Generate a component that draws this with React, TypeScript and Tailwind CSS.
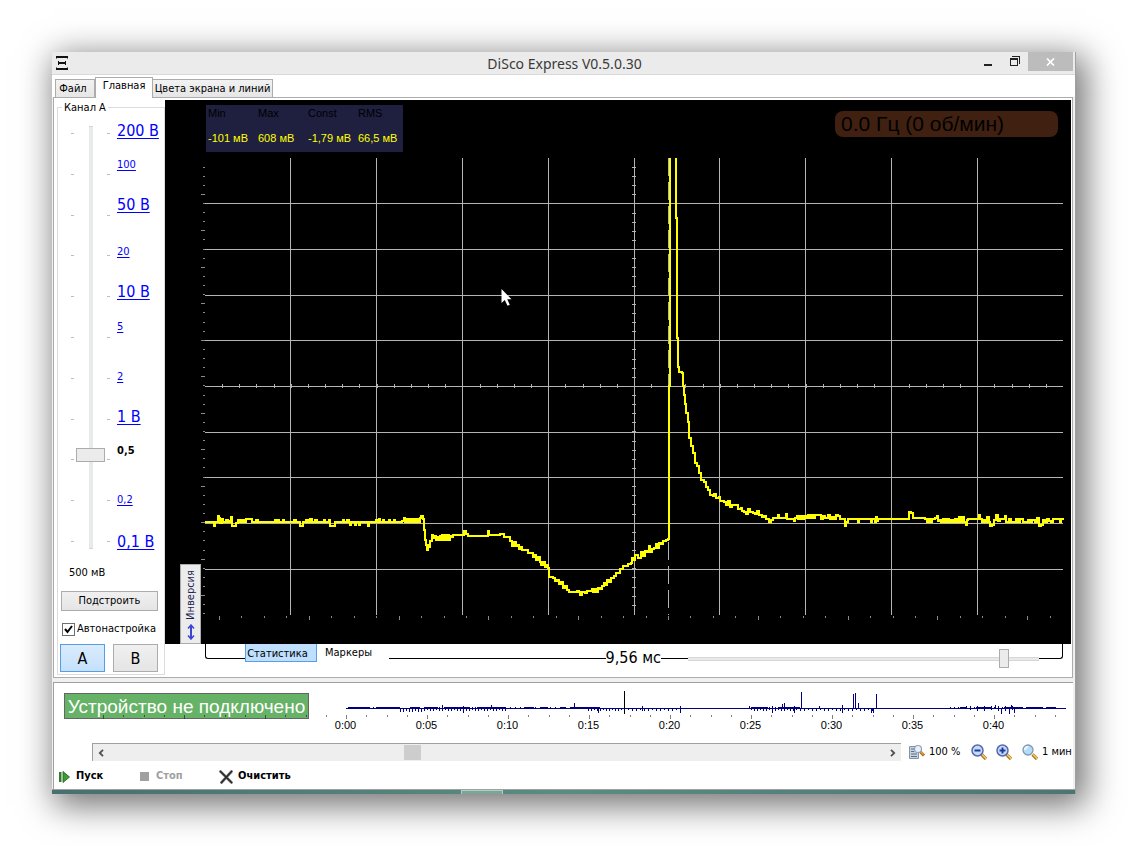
import React from "react";

const range = (n: number) => Array.from({ length: n }, (_, i) => i);

const GRID_X = [290, 376, 462, 548, 634, 719, 805, 891, 977];
const GRID_Y = [203, 249, 295, 340, 386, 432, 477, 523, 569];

const TRACE =
  "205,522 212,522 213,522 214,526 215,522 217,522 218,516 219,518 220,523 222,519 223,522 226,520 228,522 230,521 231,517 232,526 235,526 236,523 238,520 240,522 242,520 244,522 246,519 251,519 252,522 256,520 258,522 274,522 275,520 276,522 278,520 279,522 283,520 284,522 293,522 294,520 296,522 299,522 300,526 302,526 303,522 306,520 308,522 310,519 312,522 315,520 317,522 324,520 325,522 329,520 330,526 334,526 335,522 342,522 343,520 344,522 346,522 347,520 349,522 350,525 351,522 354,522 355,525 356,522 359,525 360,522 364,522 368,526 369,522 376,520 377,522 379,519 380,522 383,520 384,522 389,520 390,522 394,520 395,522 402,521 404,518 405,522 407,519 408,522 410,519 412,522 413,519 415,522 417,519 418,522 420,518 421,516 423,519 424,530 425,540 426,545 427,550 428,545 429,547 430,541 432,535 433,538 435,536 436,540 437,537 438,540 440,536 441,540 442,535 443,540 445,535 446,540 448,535 449,540 450,536 452,537 453,535 460,535 462,535 464,531 466,534 468,536 487,536 488,531 489,535 499,535 500,534 502,534 504,537 508,537 510,541 512,546 514,542 516,546 518,545 519,549 521,547 522,550 526,550 528,553 531,553 533,557 535,555 536,560 538,557 540,562 541,565 543,562 545,567 547,565 548,568 549,577 551,577 553,578 555,581 557,580 559,584 561,582 563,588 565,586 567,590 569,592 576,592 577,591 579,592 580,595 582,592 585,593 587,591 591,591 592,589 593,592 595,589 597,592 598,588 600,589 602,586 604,583 605,585 607,580 609,582 611,578 614,576 616,573 618,573 620,569 623,566 626,566 628,564 631,563 632,558 634,560 635,555 638,558 641,552 643,556 645,551 647,552 649,546 650,552 652,549 654,548 656,544 657,548 659,543 661,544 663,541 666,540 668,539 669,534 669,386 670,386 670,158";
const TRACE_FALL =
  "676,158 676,218 677,218 677,338 678,338 678,367 679,372 682,373 683,386 684,395 685,404 686,413 688,422 689,438 691,446 693,453 695,463 697,466 699,473 701,480 704,482 706,487 708,490 710,495 713,496 714,494 716,498 719,497 720,501 724,502 726,505 728,501 730,507 732,505 736,505 738,509 741,508 742,511 744,512 746,514 748,509 750,512 751,512 753,513 755,514 757,511 759,515 762,517 764,516 766,519 769,522 771,520 773,518 777,518 778,515 779,518 784,518 786,514 787,519 792,519 794,521 795,518 797,516 798,519 800,516 802,519 804,516 806,518 808,515 809,518 811,515 813,518 815,515 820,515 821,519 823,516 825,518 828,515 830,519 832,517 834,519 836,515 838,516 840,519 843,519 844,519 845,526 846,522 848,519 857,519 858,522 859,519 869,519 871,522 872,519 875,522 876,517 877,521 878,519 907,519 908,519 909,512 911,513 913,518 915,518 925,519 927,522 929,519 930,522 932,519 935,518 937,516 938,521 940,520 941,522 943,519 945,522 947,519 949,522 951,520 953,522 955,519 957,522 959,517 961,522 963,517 964,522 966,525 967,520 968,519 977,519 979,515 980,519 982,522 984,520 985,522 987,517 989,522 990,526 992,525 994,520 996,515 998,521 1000,519 1004,519 1005,516 1006,522 1009,519 1011,522 1014,522 1016,519 1018,522 1020,519 1023,522 1028,520 1030,522 1032,520 1035,522 1037,518 1039,526 1041,525 1043,520 1045,522 1047,519 1049,521 1051,522 1053,519 1055,519 1058,519 1060,522 1061,519 1063,520";

// Sample-and-hold path: each sample is held until the next one.
const stepped = (points: string) =>
  points
    .split(" ")
    .map((p, i) => {
      const [x, y] = p.split(",");
      return i === 0 ? `M${x} ${y}` : `H${x}V${y}`;
    })
    .join("");

// Activity bands on the overview: [start, end, reach above, reach below, step]
const BANDS = [
  [348, 400, 1, 0, 5],
  [400, 424, 0, 3, 3],
  [424, 510, 1, 2, 3],
  [510, 600, 1, 0, 5],
  [588, 624, 0, 2, 3],
  [624, 686, 0, 2, 4],
  [751, 800, 1, 2, 3],
  [800, 876, 0, 2, 4],
  [950, 1055, 1, 0, 4],
  [970, 1020, 2, 2, 7],
];
const THICK = [
  [348, 370], [376, 400], [410, 420], [424, 438], [444, 470], [477, 506], [524, 534], [540, 548], [560, 566], [571, 600], [751, 768], [778, 800], [960, 966], [976, 990], [1004, 1022], [1026, 1042], [1046, 1056],
];
// Single spikes on the overview: [x, top, bottom]
const SPIKES = [
  [442, 705, 709], [463, 706, 713], [491, 705, 709], [574, 703, 709], [598, 708, 713], [642, 706, 711], [680, 706, 713], [749, 706, 709],
  [772, 706, 713], [782, 704, 709], [784, 703, 709], [794, 706, 713], [801, 692, 709], [819, 706, 709], [842, 705, 713], [853, 694, 709],
  [855, 693, 709], [858, 703, 709], [871, 708, 713], [873, 708, 713], [876, 694, 709], [966, 706, 709], [995, 705, 709], [1001, 708, 714],
  [1009, 708, 714], [1011, 705, 709], [1014, 708, 713],
];

const SCALE = [
  { text: "200 В", cls: "h-5 text-base" },
  { text: "100", cls: "mt-[17px] h-3.5 text-[11px]" },
  { text: "50 В", cls: "mt-[23px] h-5 text-base" },
  { text: "20", cls: "mt-[30px] h-3.5 text-[11px]" },
  { text: "10 В", cls: "mt-[23px] h-5 text-base" },
  { text: "5", cls: "mt-[18px] h-3.5 text-[11px]" },
  { text: "2", cls: "mt-[36px] h-3.5 text-[11px]" },
  { text: "1 В", cls: "mt-[23px] h-5 text-base" },
  { text: "0,5", cls: "mt-[17px] h-3.5 text-[11px]", current: true },
  { text: "0,2", cls: "mt-[35px] h-3.5 text-[11px]" },
  { text: "0,1 В", cls: "mt-[25px] h-5 text-base" },
];

function TitleBar() {
  return (
    <header className="flex h-[23px] border-b border-[#d9d9d9] bg-[#ebebeb]">
      <div className="flex flex-1 items-center pl-1">
        <svg width="12" height="14" viewBox="0 0 12 14" aria-hidden="true" fill="none" stroke="#111" strokeWidth="2">
          <path d="M0 2.500V1h12v1.500M0 11.500V13h12v-1.500M2 7h8" />
          <path d="M2.500 5v4M9.500 5v4" strokeWidth="1" />
        </svg>
      </div>
      <h1 className="font-['Noto_Sans','Open_Sans',sans-serif] text-[14px] leading-[23px] text-[#3a3a3a]">DiSco Express V0.5.0.30</h1>
      <div className="flex flex-1 justify-end pr-[2px]">
        <button aria-label="Свернуть" className="flex w-[26px] items-center justify-center">
          <svg width="10" height="12" viewBox="0 0 10 12" aria-hidden="true"><path d="M1 7h8v2H1z" fill="#222" /></svg>
        </button>
        <button aria-label="Восстановить" className="flex w-[27px] items-center justify-center pb-1">
          <svg width="10" height="10" viewBox="0 0 10 10" aria-hidden="true" fill="none" stroke="#222" shapeRendering="crispEdges">
            <path d="M.5 2.500h7v7h-7zM0 3.500h8M2 .5h7.500V8" />
          </svg>
        </button>
        <button aria-label="Закрыть" className="flex h-[19px] w-[45px] items-center justify-center bg-[#bcbcbc]">
          <svg width="9" height="8" viewBox="0 0 9 8" aria-hidden="true"><path d="M1 .5l7 7M8 .5l-7 7" stroke="#fff" strokeWidth="1.700" /></svg>
        </button>
      </div>
    </header>
  );
}

function Tabs() {
  const idle = "h-[18px] border border-b-0 border-[#acacac] bg-gradient-to-b from-[#f2f2f2] to-[#e6e6e6]";
  return (
    <div role="tablist" className="flex h-[22px] items-end pl-[3px]">
      <button role="tab" aria-selected="false" className={`${idle} w-10 pt-px pr-1`}>Файл</button>
      <button role="tab" aria-selected="true" className="relative z-10 -mb-px h-[21px] w-[58px] border border-b-0 border-[#acacac] bg-white pb-[3px]">Главная</button>
      <button role="tab" aria-selected="false" className={`${idle} w-[120px] border-l-0 pt-px whitespace-nowrap`}>Цвета экрана и линий</button>
    </div>
  );
}

function TickColumn() {
  return (
    <div className="flex w-[3px] flex-col justify-between py-[7px]">
      {range(11).map((i) => (
        <div key={i} className="h-px bg-[#bcbcbc]" />
      ))}
    </div>
  );
}

function ChannelPanel() {
  return (
    <fieldset className="h-[575px] w-[108px] shrink-0 border border-[#dcdcdc]">
      <legend className="ml-1 h-3.5 px-0.5 leading-4">Канал А</legend>
      <div className="flex h-[437px]">
        <div className="mt-3 ml-[13px] flex h-[423px] gap-[2px]">
          <TickColumn />
          <input
            type="range"
            aria-label="Предел измерения"
            min={0}
            max={1000}
            defaultValue={211}
            className="m-0 h-full w-[29px] appearance-none bg-transparent [direction:rtl] [writing-mode:vertical-lr] [&::-webkit-slider-runnable-track]:w-1 [&::-webkit-slider-runnable-track]:border-x [&::-webkit-slider-runnable-track]:border-[#d6d6d6] [&::-webkit-slider-runnable-track]:bg-[#e7eaea] [&::-webkit-slider-thumb]:-ml-[13px] [&::-webkit-slider-thumb]:h-3.5 [&::-webkit-slider-thumb]:w-[29px] [&::-webkit-slider-thumb]:appearance-none [&::-webkit-slider-thumb]:border [&::-webkit-slider-thumb]:border-[#acacac] [&::-webkit-slider-thumb]:bg-[#ebebeb]"
          />
          <TickColumn />
        </div>
        <nav aria-label="Пределы" className="mt-[7px] ml-[7px] flex flex-col items-start">
          {SCALE.map((s) => (
            <a
              key={s.text}
              href="#scale"
              className={`flex items-center whitespace-nowrap ${s.cls} ${s.current ? "font-bold text-black" : "text-[#0000ff] underline underline-offset-2"}`}
            >
              {s.text}
            </a>
          ))}
        </nav>
      </div>
      <p className="mt-3.5 h-3.5 pl-[11px] leading-4">500 мВ</p>
      <button className="mt-3 ml-[3px] block h-5 w-[97px] border border-[#acacac] bg-gradient-to-b from-[#f0f0f0] to-[#e5e5e5] pt-px">Подстроить</button>
      <label className="mt-[11px] ml-1 flex h-3.5 items-center gap-[2px] whitespace-nowrap">
        <span className="grid h-[13px] w-[13px] shrink-0">
          <input type="checkbox" defaultChecked className="peer col-start-1 row-start-1 m-0 h-[13px] w-[13px] appearance-none border border-[#707070] bg-white" />
          <svg viewBox="0 0 13 13" aria-hidden="true" className="pointer-events-none invisible col-start-1 row-start-1 peer-checked:visible">
            <path d="M3 6l2.500 3L10 3" fill="none" stroke="#000" strokeWidth="2" />
          </svg>
        </span>
        Автонастройка
      </label>
      <div className="mt-2 ml-[2px] flex gap-2 text-base">
        <button aria-pressed="true" className="h-7 w-[45px] border border-[#569de5] bg-gradient-to-b from-[#daecfc] to-[#c4e0fc] pt-px">A</button>
        <button aria-pressed="false" className="h-7 w-[45px] border border-[#acacac] bg-gradient-to-b from-[#f0f0f0] to-[#e5e5e5] pt-px">B</button>
      </div>
    </fieldset>
  );
}

function Plot() {
  return (
    <svg viewBox="165 100 906 544" preserveAspectRatio="none" className="block h-[544px] w-full" shapeRendering="crispEdges" role="img" aria-label="Осциллограмма">
      <g stroke="#b4b4b4" fill="none">
        {GRID_X.map((x) => <path key={x} d={`M${x + 0.5} 158V615`} />)}
        {GRID_Y.map((y) => <path key={y} d={`M205 ${y + 0.5}H1063`} />)}
        {range(49).map((i) => {
          const y = Math.round(167 + 9.12 * i) + 0.5;
          return <path key={i} d={`M632 ${y}h4`} />;
        })}
        {range(49).map((i) => {
          const x = Math.round(205 + 17.16 * (i + 1)) + 0.5;
          return <path key={i} d={`M${x} 384v4`} />;
        })}
        <path d="M668.500 158V615" strokeDasharray="18 6" />
      </g>
      <g stroke="#8a8a8a" fill="none">
        {range(50).map((i) => {
          const y = Math.round(166.5 + 9.12 * i) + 0.5;
          return <path key={i} d={i % 4 === 3 ? `M201 ${y}h4` : `M203 ${y}h2`} />;
        })}
        {range(38).map((i) => {
          const x = Math.round(219 + 22.45 * i) + 0.5;
          return <path key={i} d={i % 4 === 0 ? `M${x} 616v4` : `M${x} 616v2`} />;
        })}
      </g>
      <g stroke="#ffff00" strokeWidth="2" fill="none">
        <path d={stepped(TRACE)} />
        <path d={stepped(TRACE_FALL)} />
      </g>
      <path d="M501.500 289v14l3.300-3 2.700 5.800 2.300-1-2.600-5.600h4.300z" fill="#fff" shapeRendering="auto" />
    </svg>
  );
}

function Stats() {
  const cells = [
    ["Min", "-101 мВ"],
    ["Max", "608 мВ"],
    ["Const", "-1,79 мВ"],
    ["RMS", "66,5 мВ"],
  ];
  return (
    <dl className="absolute top-[5px] left-[41px] flex h-[47px] w-[197px] bg-[#1f1f3f] pl-[2px] font-['Liberation_Sans',Arial,sans-serif] text-[11px] leading-4 whitespace-nowrap">
      {cells.map(([k, v]) => (
        <div key={k} className="w-[50px] shrink-0">
          <dt className="text-black">{k}</dt>
          <dd className="mt-[9px] text-[#ffff00]">{v}</dd>
        </div>
      ))}
    </dl>
  );
}

function Scope() {
  return (
    <section className="flex min-w-0 flex-1 flex-col">
      <div className="relative bg-black">
        <Plot />
        <Stats />
        <div className="absolute top-[11px] right-[13px] h-[26px] w-[223px] rounded-lg bg-[#402010] pl-[6px] font-['Liberation_Sans',Arial,sans-serif] text-[21px] leading-[26px] text-black">
          0.0 Гц (0 об/мин)
        </div>
        <button className="absolute bottom-0 left-[15px] flex h-20 w-[21px] flex-col items-center justify-between border border-[#acacac] bg-[#ececec] pt-[5px] pb-[3px]">
          <span className="rotate-180 leading-4 text-[#1c1c50] [writing-mode:vertical-rl]">Инверсия</span>
          <svg width="8" height="16" viewBox="0 0 8 16" aria-hidden="true" fill="none" stroke="#3c46d0">
            <path d="M4 1v14" strokeWidth="2" />
            <path d="M1 4.500l3-3.500 3 3.500M1 11.500L4 15l3-3.500" strokeWidth="1.500" />
          </svg>
        </button>
      </div>
      <div className="flex h-[33px] items-start pr-2 pl-10">
        <div className="h-[15px] w-10 rounded-bl-[3px] border-b border-l border-black" />
        <button className="-mt-px h-[19px] w-[72px] border border-[#5a9fe4] bg-[#bfdffe] pt-px pr-[7px] leading-[17px]">Статистика</button>
        <button className="-mt-px h-[19px] w-[72px] bg-white pl-2 text-left leading-5">Маркеры</button>
        <div className="h-[15px] flex-1 border-b border-black" />
        <output className="h-7 text-base leading-7 whitespace-nowrap">9,56 мс</output>
        <div className="h-[15px] w-[27px] border-b border-black" />
        <input
          type="range"
          aria-label="Развёртка"
          min={0}
          max={1000}
          defaultValue={911}
          className="m-0 mt-[5px] h-[19px] w-[351px] appearance-none bg-transparent [&::-webkit-slider-runnable-track]:h-1 [&::-webkit-slider-runnable-track]:border-y [&::-webkit-slider-runnable-track]:border-[#d6d6d6] [&::-webkit-slider-runnable-track]:bg-[#e7eaea] [&::-webkit-slider-thumb]:-mt-[9px] [&::-webkit-slider-thumb]:h-[19px] [&::-webkit-slider-thumb]:w-[10px] [&::-webkit-slider-thumb]:appearance-none [&::-webkit-slider-thumb]:border [&::-webkit-slider-thumb]:border-[#acacac] [&::-webkit-slider-thumb]:bg-[#ebebeb]"
        />
        <div className="h-[15px] w-6 rounded-br-[3px] border-r border-b border-black" />
      </div>
    </section>
  );
}

function Timeline() {
  return (
    <div className="relative pt-2">
      <div className="absolute top-[10px] left-[10px] h-[26px] w-[245px] border border-[#666] bg-[#66b266] text-center font-['Liberation_Sans',Arial,sans-serif] text-[19px] leading-[25px] whitespace-nowrap text-white">
        Устройство не подключено
      </div>
      <svg viewBox="54 691 1019 30" preserveAspectRatio="none" className="relative block h-[30px] w-full" shapeRendering="crispEdges" fill="none" role="img" aria-label="Обзор записи">
        <g stroke="#000" strokeOpacity="0.5">
          {range(48).map((i) => {
            const x = Math.round(103 + 20.25 * i) + 0.5;
            return <path key={i} d={`M${x} 715v${i % 4 === 0 ? 4 : 2}`} />;
          })}
        </g>
        <g stroke="#000080">
          <path d="M346 708.500H1066" />
          {THICK.map(([a, b]) => <path key={a} d={`M${a} 707.500H${b}`} />)}
          {BANDS.map(([a, b, up, down, step], k) => (
            <path
              key={k}
              d={range(Math.floor((b - a) / step))
                .map((i) => `M${a + i * step + 0.5} ${708 - up}V${709 + down - ((i * 7 + k) % 3 === 0 && down > 0 ? 1 : 0)}`)
                .join("")}
            />
          ))}
          {SPIKES.map(([x, a, b]) => <path key={x} d={`M${x + 0.5} ${a}V${b}`} />)}
        </g>
        <path d="M624.500 691V714" stroke="#000" />
      </svg>
      <div className="-mt-[3px] flex pl-[251px] font-['Liberation_Sans',Arial,sans-serif] text-[11px] leading-3.5">
        {["0:00", "0:05", "0:10", "0:15", "0:20", "0:25", "0:30", "0:35", "0:40"].map((t) => (
          <span key={t} className="w-[81px] text-center">{t}</span>
        ))}
      </div>
    </div>
  );
}

function Lens({ sign }: { sign?: string }) {
  return (
    <svg width="17" height="17" viewBox="0 0 17 17" aria-hidden="true">
      <path d="M10.500 10.500l4.500 4.500" stroke="#b07a20" strokeWidth="3.200" />
      <path d="M11 10.500l4.500 4.500" stroke="#f4d070" strokeWidth="1.300" />
      {sign ? (
        <>
          <circle cx="6.500" cy="6.500" r="5.500" fill="#c4dcf8" stroke="#5a68b0" strokeWidth="1.500" />
          <path d={sign} stroke="#1c3c9c" strokeWidth="2" />
        </>
      ) : (
        <>
          <circle cx="6" cy="6" r="5" fill="#b4dcf6" stroke="#8098b0" strokeWidth="1.300" />
          <path d="M3 6c0-2 1.500-3 3-3" fill="none" stroke="#eef8ff" strokeWidth="2" />
        </>
      )}
    </svg>
  );
}

function ScrollRow() {
  return (
    <div className="mt-[11px] flex h-[18px] items-center pr-1 pl-[38px] whitespace-nowrap">
      <div className="flex h-[18px] flex-1 items-center border-t border-l border-[#a0a0a0] bg-[#eeeeee]">
        <button aria-label="Назад" className="flex w-4 justify-center">
          <svg width="6" height="8" viewBox="0 0 6 8" aria-hidden="true"><path d="M5 .8L1.800 4 5 7.200" fill="none" stroke="#505050" strokeWidth="1.800" /></svg>
        </button>
        <div className="flex flex-1">
          <div className="w-[38%]" />
          <div className="h-[15px] w-[17px] bg-[#cdcdcd]" />
        </div>
        <button aria-label="Вперёд" className="flex w-4 justify-center">
          <svg width="6" height="8" viewBox="0 0 6 8" aria-hidden="true"><path d="M1 .8L4.200 4 1 7.200" fill="none" stroke="#505050" strokeWidth="1.800" /></svg>
        </button>
      </div>
      <button className="ml-2 flex items-center gap-[3px]">
        <svg width="17" height="17" viewBox="0 0 17 17" aria-hidden="true">
          <path d="M.5 2.500h9v12h-9z" fill="#c9d4e2" stroke="#8592a4" />
          <path d="M2 5h4M2 7.500h3M2 10h6M2 12.500h6" stroke="#5c6c84" />
          <path d="M11 7.500l4 4" stroke="#a86418" strokeWidth="3" />
          <path d="M11.500 7.500l3 3" stroke="#f0a030" strokeWidth="1.500" />
          <circle cx="9" cy="5" r="3.500" fill="#e4f2fc" stroke="#90a0b4" strokeWidth="1.200" />
        </svg>
        <span className="w-[33px] pt-px text-left">100 %</span>
      </button>
      <button aria-label="Уменьшить" className="ml-[9px]"><Lens sign="M3.500 6.500h6" /></button>
      <button aria-label="Увеличить" className="ml-2"><Lens sign="M3.500 6.500h6M6.500 3.500v6" /></button>
      <button className="ml-[9px] flex items-center gap-[3px]">
        <Lens />
        <span className="w-[27px] pt-px text-left">1 мин</span>
      </button>
    </div>
  );
}

function Actions() {
  return (
    <div className="mt-1 flex h-6 items-center pb-px pl-[5px] font-bold whitespace-nowrap">
      <button className="flex w-[81px] items-center gap-1.5">
        <svg width="11" height="12" viewBox="0 0 11 12" aria-hidden="true">
          <path d="M0 1h2.500v10H0z" fill="#2f7d2b" />
          <path d="M4 .5L10.500 6 4 11.500z" fill="#3f9a38" stroke="#1f5c1c" strokeWidth=".8" />
        </svg>
        Пуск
      </button>
      <button disabled className="flex w-[79px] items-center gap-[7px] text-[#a0a0a0]">
        <span className="h-[9px] w-[9px] bg-[#a0a0a0]" />
        Стоп
      </button>
      <button className="flex items-center gap-[5px]">
        <svg width="14" height="14" viewBox="0 0 14 14" aria-hidden="true" fill="none" strokeLinecap="round">
          <path d="M1.500 1.500l11 11M12.500 1.500L2.500 12.500" stroke="#888" strokeWidth="2.800" />
          <path d="M1.500 1.500l11 11M12.500 1.500L2.500 12.500" stroke="#2a2a2a" strokeWidth="1.700" />
        </svg>
        Очистить
      </button>
    </div>
  );
}

export default function App() {
  return (
    <div className="bg-white p-[52px] font-['DejaVu_Sans_Condensed','DejaVu_Sans',sans-serif] text-[11px] text-black">
      <main className="border-r border-[#a0a0a0] bg-white shadow-[6px_8px_32px_4px_rgba(0,0,0,0.55)]">
        <TitleBar />
        <Tabs />
        <div className="border-r-2 border-l border-[#f0f0f0]">
          <div className="flex border border-[#acacac] pt-[2px] pr-px pl-[3px]">
            <ChannelPanel />
            <Scope />
          </div>
          <div className="h-1 bg-[#f0f0f0]" />
          <div className="border-t border-l border-[#a0a0a0]">
            <Timeline />
            <ScrollRow />
            <Actions />
          </div>
        </div>
        <footer className="h-[5px] border-t border-[#a0a0a0] bg-gradient-to-r from-[#47706e] via-[#5a8c80] to-[#4c7674]">
          <div className="ml-[40%] h-1 w-[42px] border border-b-0 border-[#b4ccc4] bg-[#7aa698]" />
        </footer>
      </main>
    </div>
  );
}
